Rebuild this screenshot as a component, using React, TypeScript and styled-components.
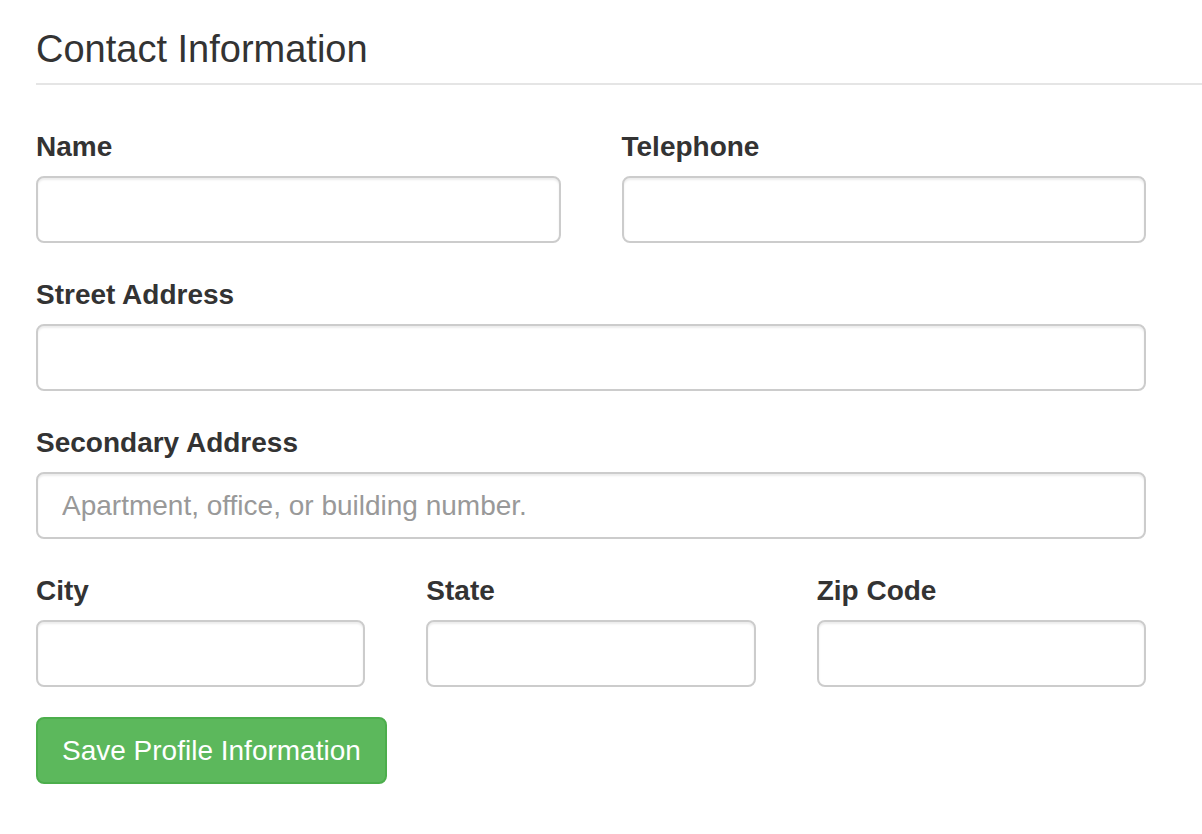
import React from "react";
import styled, { createGlobalStyle } from "styled-components";

const GlobalStyle = createGlobalStyle`
  html, body {
    margin: 0;
    padding: 0;
    background: #fff;
  }
  body {
    font-family: "Liberation Sans", Arial, sans-serif;
    color: #333;
  }
  * {
    box-sizing: border-box;
  }
`;

const Page = styled.div`
  padding: 27px 0 0 36px;
  overflow: hidden;
`;

const Form = styled.form`
  margin: 0;
`;

const Legend = styled.div`
  font-size: 38px;
  line-height: 44px;
  color: #333;
  padding-bottom: 12px;
  border-bottom: 2px solid #e5e5e5;
  margin-bottom: 42px;
`;

const Fields = styled.div`
  width: 1110px;
`;

const Row = styled.div<{ $cols: number }>`
  display: grid;
  grid-template-columns: repeat(${(p) => p.$cols}, 1fr);
  column-gap: 61px;
`;

const Group = styled.div`
  display: flex;
  flex-direction: column;
  margin-bottom: 32px;
`;

const Label = styled.label`
  font-size: 28px;
  font-weight: bold;
  line-height: 40px;
  margin-bottom: 9px;
`;

const Input = styled.input`
  height: 67px;
  width: 100%;
  padding: 0 24px;
  font-family: "Liberation Sans", Arial, sans-serif;
  font-size: 28px;
  color: #555;
  background: #fff;
  border: 2px solid #ccc;
  border-radius: 8px;
  box-shadow: inset 0 2px 2px rgba(0, 0, 0, 0.075);
  outline: none;
  &::placeholder {
    color: #999;
  }
`;

const Actions = styled.div`
  margin-top: -2px;
`;

const SaveButton = styled.button`
  height: 67px;
  padding: 0 24px;
  font-family: "Liberation Sans", Arial, sans-serif;
  font-size: 28px;
  color: #fff;
  background: #5cb85c;
  border: 2px solid #4cae4c;
  border-radius: 8px;
  cursor: pointer;
`;

const Field = ({ label, placeholder }: { label: string; placeholder?: string }) => (
  <Group>
    <Label>{label}</Label>
    <Input type="text" placeholder={placeholder} />
  </Group>
);

const App = () => (
  <Page>
    <GlobalStyle />
    <Form onSubmit={(e) => e.preventDefault()}>
      <Legend>Contact Information</Legend>
      <Fields>
        <Row $cols={2}>
          <Field label="Name" />
          <Field label="Telephone" />
        </Row>
        <Field label="Street Address" />
        <Field
          label="Secondary Address"
          placeholder="Apartment, office, or building number."
        />
        <Row $cols={3}>
          <Field label="City" />
          <Field label="State" />
          <Field label="Zip Code" />
        </Row>
        <Actions>
          <SaveButton type="submit">Save Profile Information</SaveButton>
        </Actions>
      </Fields>
    </Form>
  </Page>
);

export default App;
